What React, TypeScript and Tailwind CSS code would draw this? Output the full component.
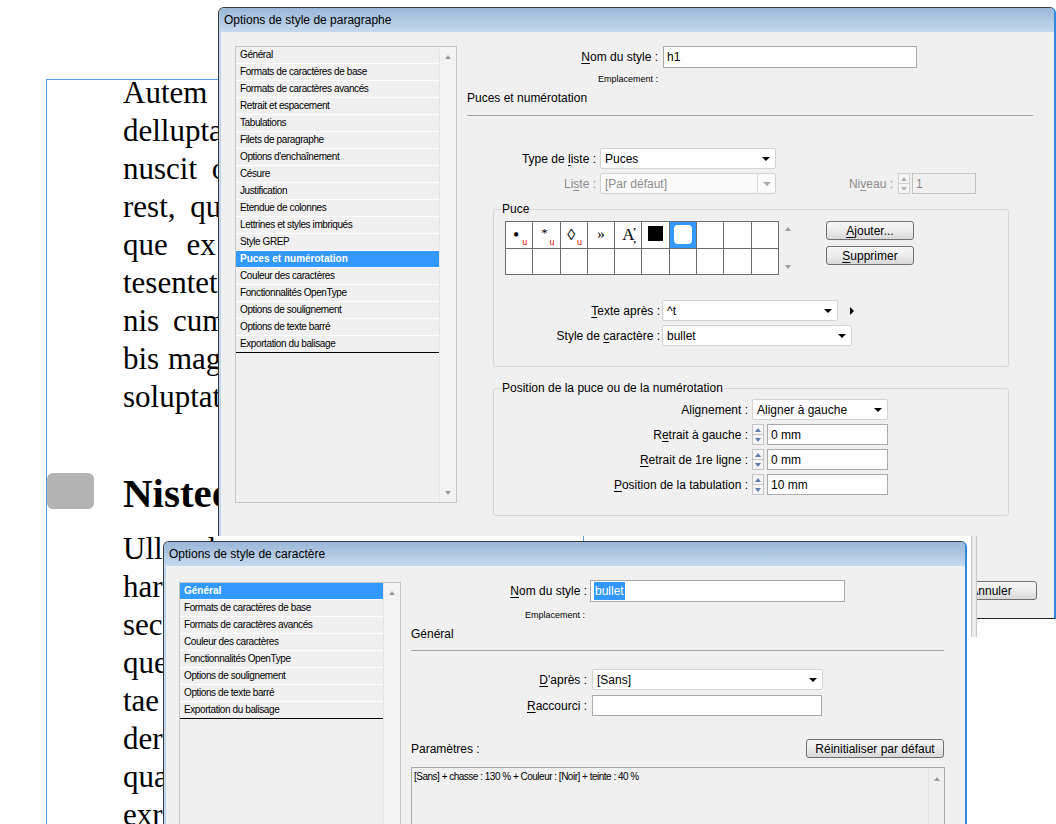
import React from "react";

const ui = "font-['Liberation_Sans',Arial,sans-serif]";
const serif = "font-['Liberation_Serif','Times_New_Roman',serif]";

const paraItems = [
  "Général",
  "Formats de caractères de base",
  "Formats de caractères avancés",
  "Retrait et espacement",
  "Tabulations",
  "Filets de paragraphe",
  "Options d'enchaînement",
  "Césure",
  "Justification",
  "Etendue de colonnes",
  "Lettrines et styles imbriqués",
  "Style GREP",
  "Puces et numérotation",
  "Couleur des caractères",
  "Fonctionnalités OpenType",
  "Options de soulignement",
  "Options de texte barré",
  "Exportation du balisage",
];

const charItems = [
  "Général",
  "Formats de caractères de base",
  "Formats de caractères avancés",
  "Couleur des caractères",
  "Fonctionnalités OpenType",
  "Options de soulignement",
  "Options de texte barré",
  "Exportation du balisage",
];

function U({ children }: { children: React.ReactNode }) {
  return <span className="underline decoration-1 underline-offset-2">{children}</span>;
}

function UpArrow({ color = "border-b-[#9d9d9d]" }: { color?: string }) {
  return <span className={`h-0 w-0 border-x-[3px] border-b-[4px] border-x-transparent ${color}`} />;
}

function DownArrow({ color = "border-t-[#9d9d9d]" }: { color?: string }) {
  return <span className={`h-0 w-0 border-x-[3px] border-t-[4px] border-x-transparent ${color}`} />;
}

function Select({ value, className = "", muted = false }: { value: string; className?: string; muted?: boolean }) {
  return (
    <div
      className={`flex h-[21px] shrink-0 items-center rounded-[2px] border ${
        muted ? "border-[#d2d2d2] bg-[#fafafa] text-[#8c8c8c]" : "border-[#d3d3d3] bg-white"
      } ${className}`}
    >
      <span className="flex-1 truncate pl-[4px]">{value}</span>
      <span className={`flex h-full w-[18px] items-center justify-center ${muted ? "border-l border-[#dadada]" : ""}`}>
        <span
          className={`h-0 w-0 border-x-[4px] border-t-[4px] border-x-transparent ${
            muted ? "border-t-[#a9a9a9]" : "border-t-black"
          }`}
        />
      </span>
    </div>
  );
}

function Field({ children, className = "", muted = false }: { children?: React.ReactNode; className?: string; muted?: boolean }) {
  return (
    <div
      className={`flex h-[21px] shrink-0 items-center border pl-[3px] ${
        muted ? "border-[#c2c2c2] text-[#8c8c8c]" : "border-[#a9a9a9] bg-white"
      } ${className}`}
    >
      {children}
    </div>
  );
}

function Spin({ muted = false }: { muted?: boolean }) {
  const c = muted ? "border-[#cfcfcf]" : "border-[#c3c3c3]";
  return (
    <div className={`flex h-[21px] w-[12px] shrink-0 flex-col border bg-[#f5f5f5] ${c}`}>
      <div className={`flex flex-1 items-center justify-center border-b ${c}`}>
        <UpArrow color={muted ? "border-b-[#b5b5b5]" : "border-b-[#5f7db0]"} />
      </div>
      <div className="flex flex-1 items-center justify-center">
        <DownArrow color={muted ? "border-t-[#b5b5b5]" : "border-t-[#5f7db0]"} />
      </div>
    </div>
  );
}

function Btn({ children, className = "" }: { children: React.ReactNode; className?: string }) {
  return (
    <div
      className={`flex h-[19px] shrink-0 items-center justify-center rounded-[3px] border border-[#707070] bg-linear-to-b from-[#f7f7f7] via-[#ececec] to-[#d8d8d8] text-[12px] ${className}`}
    >
      {children}
    </div>
  );
}

function NavList({ items, active, className = "" }: { items: string[]; active: string; className?: string }) {
  return (
    <div className={`flex shrink-0 border border-[#c6c6c6] bg-[#f0f0f0] ${className}`}>
      <div className="w-[203px]">
        {items.map((t, i) => (
          <div
            key={t + i}
            className={`h-[17px] border-b pl-[4px] text-[10px] leading-[16px] whitespace-nowrap ${
              i === items.length - 1 ? "border-black" : "border-white"
            } ${t === active ? "bg-[#3399ff] font-bold text-white" : "tracking-[-0.4px] text-black"}`}
          >
            {t}
          </div>
        ))}
      </div>
      <div className="flex w-[17px] flex-col items-center justify-between border-l border-[#e6e6e6] bg-[#f3f3f3] pt-[8px] pb-[7px]">
        <UpArrow />
        <DownArrow />
      </div>
    </div>
  );
}

function TitleBar({ title }: { title: string }) {
  return (
    <div className="h-[24px] shrink-0 bg-linear-to-b from-[#9ab7d8] to-[#c5d9ee] pl-[5px] text-[12px] leading-[24px] text-black">
      {title}
    </div>
  );
}

function GlyphGrid() {
  const cell = "relative flex items-center justify-center bg-white";
  const red = "absolute bottom-[1px] right-[5px] text-[9px] leading-none text-[#e00000]";
  return (
    <div className="grid h-[54px] w-[274px] shrink-0 grid-cols-10 grid-rows-2 gap-px border border-[#6b6b6b] bg-[#6b6b6b]">
      <div className={cell}>
        <span className={`${serif} pr-[6px] text-[18px] leading-none`}>•</span>
        <span className={red}>u</span>
      </div>
      <div className={cell}>
        <span className={`${serif} pr-[4px] pb-[4px] text-[13px] leading-none`}>*</span>
        <span className={red}>u</span>
      </div>
      <div className={cell}>
        <span className="pr-[5px] text-[16px] leading-none">◊</span>
        <span className={red}>u</span>
      </div>
      <div className={cell}>
        <span className={`${serif} text-[15px] leading-none`}>»</span>
      </div>
      <div className={cell}>
        <span className={`${serif} text-[17px] leading-none`}>{"A\u0313\u0326"}</span>
      </div>
      <div className={cell}>
        <span className="mb-[2px] h-[15px] w-[15px] bg-black" />
      </div>
      <div className="flex items-center justify-center bg-[#3399ff]">
        <span className="h-[19px] w-[18px] rounded-[4px] bg-white" />
      </div>
      {Array.from({ length: 13 }).map((_, i) => (
        <div key={i} className="bg-white" />
      ))}
    </div>
  );
}

function ParagraphDialog() {
  return (
    <>
      <div
        className={`absolute left-[218px] top-[7px] flex h-[529px] w-[838px] flex-col overflow-hidden rounded-t-[6px] border-x border-t border-[#3a3a3a] border-r-[2px] border-r-[#2f86e0] ${ui} text-[12px] text-black`}
      >
        <TitleBar title="Options de style de paragraphe" />
        <div className="flex flex-1 border-l-[2px] border-[#c2d6ec] bg-[#f0f0f0] pl-[14px] pt-[14px]">
          <NavList items={paraItems} active="Puces et numérotation" className="h-[457px]" />
          <div className="ml-[10px] flex flex-col">
            <div className="flex h-[22px] items-center">
              <div className="w-[191px] text-right">
                <U>N</U>om du style :
              </div>
              <Field className="ml-[5px] h-[22px] w-[254px]">h1</Field>
            </div>
            <div className="mt-[6px] w-[191px] text-right text-[9px] leading-[11px]">Emplacement :</div>
            <div className="mt-[6px] leading-[14px]">Puces et numérotation</div>
            <div className="mt-[10px] h-px w-[566px] bg-[#a3a3a3]" />

            <div className="mt-[32px] flex h-[21px] items-center">
              <div className="w-[129px] text-right">
                Type de <U>l</U>iste :
              </div>
              <Select value="Puces" className="ml-[4px] w-[176px]" />
            </div>
            <div className="mt-[4px] flex h-[21px] items-center">
              <div className="w-[129px] text-right text-[#8c8c8c]">
                Li<U>s</U>te :
              </div>
              <Select value="[Par défaut]" muted className="ml-[4px] w-[176px]" />
              <div className="w-[117px] text-right text-[#8c8c8c]">
                Ni<U>v</U>eau :
              </div>
              <div className="ml-[5px]">
                <Spin muted />
              </div>
              <Field muted className="ml-[2px] w-[64px]">
                1
              </Field>
            </div>

            <fieldset className="ml-[26px] mt-[8px] w-[516px] rounded-[3px] border border-[#d6d6d6] pb-[20px]">
              <legend className="ml-[7px] px-[1px] leading-[14px]">Puce</legend>
              <div className="ml-[11px] mt-[5px] flex items-start">
                <GlyphGrid />
                <div className="ml-[3px] flex h-[54px] w-[12px] flex-col items-center justify-between py-[6px]">
                  <UpArrow />
                  <DownArrow />
                </div>
                <div className="ml-[32px] flex flex-col gap-[6px]">
                  <Btn className="w-[88px]">
                    <U>A</U>jouter...
                  </Btn>
                  <Btn className="w-[88px]">
                    <U>S</U>upprimer
                  </Btn>
                </div>
              </div>
              <div className="mt-[25px] flex h-[21px] items-center">
                <div className="w-[166px] text-right">
                  <U>T</U>exte après :
                </div>
                <Select value="^t" className="ml-[2px] w-[176px]" />
                <span className="ml-[12px] h-0 w-0 border-y-[4px] border-l-[4px] border-y-transparent border-l-black" />
              </div>
              <div className="mt-[4px] flex h-[21px] items-center">
                <div className="w-[166px] text-right">
                  Style de <U>c</U>aractère :
                </div>
                <Select value="bullet" className="ml-[2px] w-[190px]" />
              </div>
            </fieldset>

            <fieldset className="ml-[26px] mt-[14px] w-[516px] rounded-[3px] border border-[#d6d6d6] pb-[20px]">
              <legend className="ml-[7px] px-[1px] leading-[14px]">Position de la puce ou de la numérotation</legend>
              <div className="mt-[4px] flex h-[21px] items-center">
                <div className="w-[254px] text-right">
                  Ali<U>g</U>nement :
                </div>
                <Select value="Aligner à gauche" className="ml-[4px] w-[136px]" />
              </div>
              {[
                [<>R<U>e</U>trait à gauche :</>, "0 mm"],
                [<><U>R</U>etrait de 1re ligne :</>, "0 mm"],
                [<><U>P</U>osition de la tabulation :</>, "10 mm"],
              ].map(([label, val], i) => (
                <div key={i} className="mt-[4px] flex h-[21px] items-center">
                  <div className="w-[254px] text-right">{label}</div>
                  <div className="ml-[4px]">
                    <Spin />
                  </div>
                  <Field className="ml-[3px] w-[121px]">{val}</Field>
                </div>
              ))}
            </fieldset>
          </div>
        </div>
      </div>

      {/* bottom right piece of the paragraph dialog, outside the character dialog */}
      <div className="absolute left-[971px] top-[536px] h-[101px] w-[6px] border-x border-[#c9c9c9] bg-[#ececec]" />
      <div
        className={`absolute left-[977px] top-[530px] h-[89px] w-[79px] overflow-hidden border-b border-[#262626] border-r-[2px] border-r-[#2f86e0] bg-[#f0f0f0] ${ui} text-black`}
      >
        <Btn className="-ml-[32px] mt-[51px] w-[92px]">Annuler</Btn>
      </div>
    </>
  );
}

function CharDialog() {
  return (
    <div
      className={`absolute left-[163px] top-[541px] flex h-[300px] w-[804px] flex-col overflow-hidden rounded-t-[6px] border-x border-t border-[#3a3a3a] border-r-[2px] border-r-[#2f86e0] ${ui} text-[12px] text-black`}
    >
      <TitleBar title="Options de style de caractère" />
      <div className="flex flex-1 border-l-[2px] border-[#c2d6ec] bg-[#f0f0f0] pl-[13px] pt-[16px]">
        <NavList items={charItems} active="Général" className="h-[300px]" />
        <div className="ml-[10px] flex flex-col">
          <div className="-mt-[2px] flex h-[22px] items-center">
            <div className="w-[176px] text-right">
              <U>N</U>om du style :
            </div>
            <Field className="ml-[3px] h-[22px] w-[255px]">
              <span className="bg-[#3399ff] px-px text-white">bullet</span>
            </Field>
          </div>
          <div className="mt-[8px] w-[174px] text-right text-[9px] leading-[11px]">Emplacement :</div>
          <div className="mt-[6px] leading-[14px]">Général</div>
          <div className="mt-[9px] h-px w-[533px] bg-[#a3a3a3]" />
          <div className="mt-[18px] flex h-[21px] items-center">
            <div className="w-[176px] text-right">
              <U>D</U>'après :
            </div>
            <Select value="[Sans]" className="ml-[5px] w-[231px]" />
          </div>
          <div className="mt-[5px] flex h-[21px] items-center">
            <div className="w-[176px] text-right">
              <U>R</U>accourci :
            </div>
            <Field className="ml-[5px] w-[230px]" />
          </div>
          <div className="mt-[23px] flex w-[533px] items-center justify-between">
            <span>Paramètres :</span>
            <Btn className="w-[138px]">Réinitialiser par défaut</Btn>
          </div>
          <div className="mt-[9px] flex h-[100px] w-[534px] border border-[#a9a9a9]">
            <div className="flex-1 pl-[2px] pt-[3px] text-[10px] leading-[12px] tracking-[-0.5px]">
              [Sans] + chasse : 130 % + Couleur : [Noir] + teinte : 40 %
            </div>
            <div className="flex w-[16px] flex-col items-center border-l border-[#e2e2e2] pt-[9px]">
              <UpArrow />
            </div>
          </div>
        </div>
      </div>
    </div>
  );
}

const firstLines: [string, string][] = [
  ["Autem quiasped quatur aut", "[word-spacing:10px]"],
  ["delluptatur sum fugiatem", ""],
  ["nuscit odis dolorem", "[word-spacing:7px]"],
  ["rest, qui dolupta", "[word-spacing:7px]"],
  ["que ex eatur", "[word-spacing:11px]"],
  ["tesentet quo", ""],
  ["nis cum", "[word-spacing:6px]"],
  ["bis magnatem", "[word-spacing:1px]"],
  ["soluptatem", ""],
];

const secondLines = ["Ullant harum", "harcipsum", "secum", "quelit", "tae nim", "derum", "quatur", "exremodit"];

function Page() {
  return (
    <div className={`ml-[46px] mt-[79px] h-[760px] w-[538px] border-x border-t border-[#5b9de9] ${serif} text-black`}>
      <div className="-mt-[6px] overflow-hidden text-[31px] leading-[38px]">
        {firstLines.map(([t, ws]) => (
          <div key={t} className={`h-[38px] whitespace-nowrap pl-[76px] ${ws}`}>
            {t}
          </div>
        ))}
        <div className="mt-[53px] flex h-[48px] items-start">
          <span className="mt-[4px] h-[36px] w-[47px] shrink-0 rounded-[6px] bg-[#b3b3b3]" />
          <span className="ml-[29px] whitespace-nowrap text-[41px] leading-[48px] font-bold">Nisteost volorro</span>
        </div>
        <div className="mt-[13px]">
          {secondLines.map((t) => (
            <div key={t} className="h-[38px] whitespace-nowrap pl-[76px]">
              {t}
            </div>
          ))}
        </div>
      </div>
    </div>
  );
}

export default function App() {
  return (
    <div className="relative h-[824px] w-[1056px] overflow-hidden bg-white">
      <Page />
      <ParagraphDialog />
      <CharDialog />
    </div>
  );
}
